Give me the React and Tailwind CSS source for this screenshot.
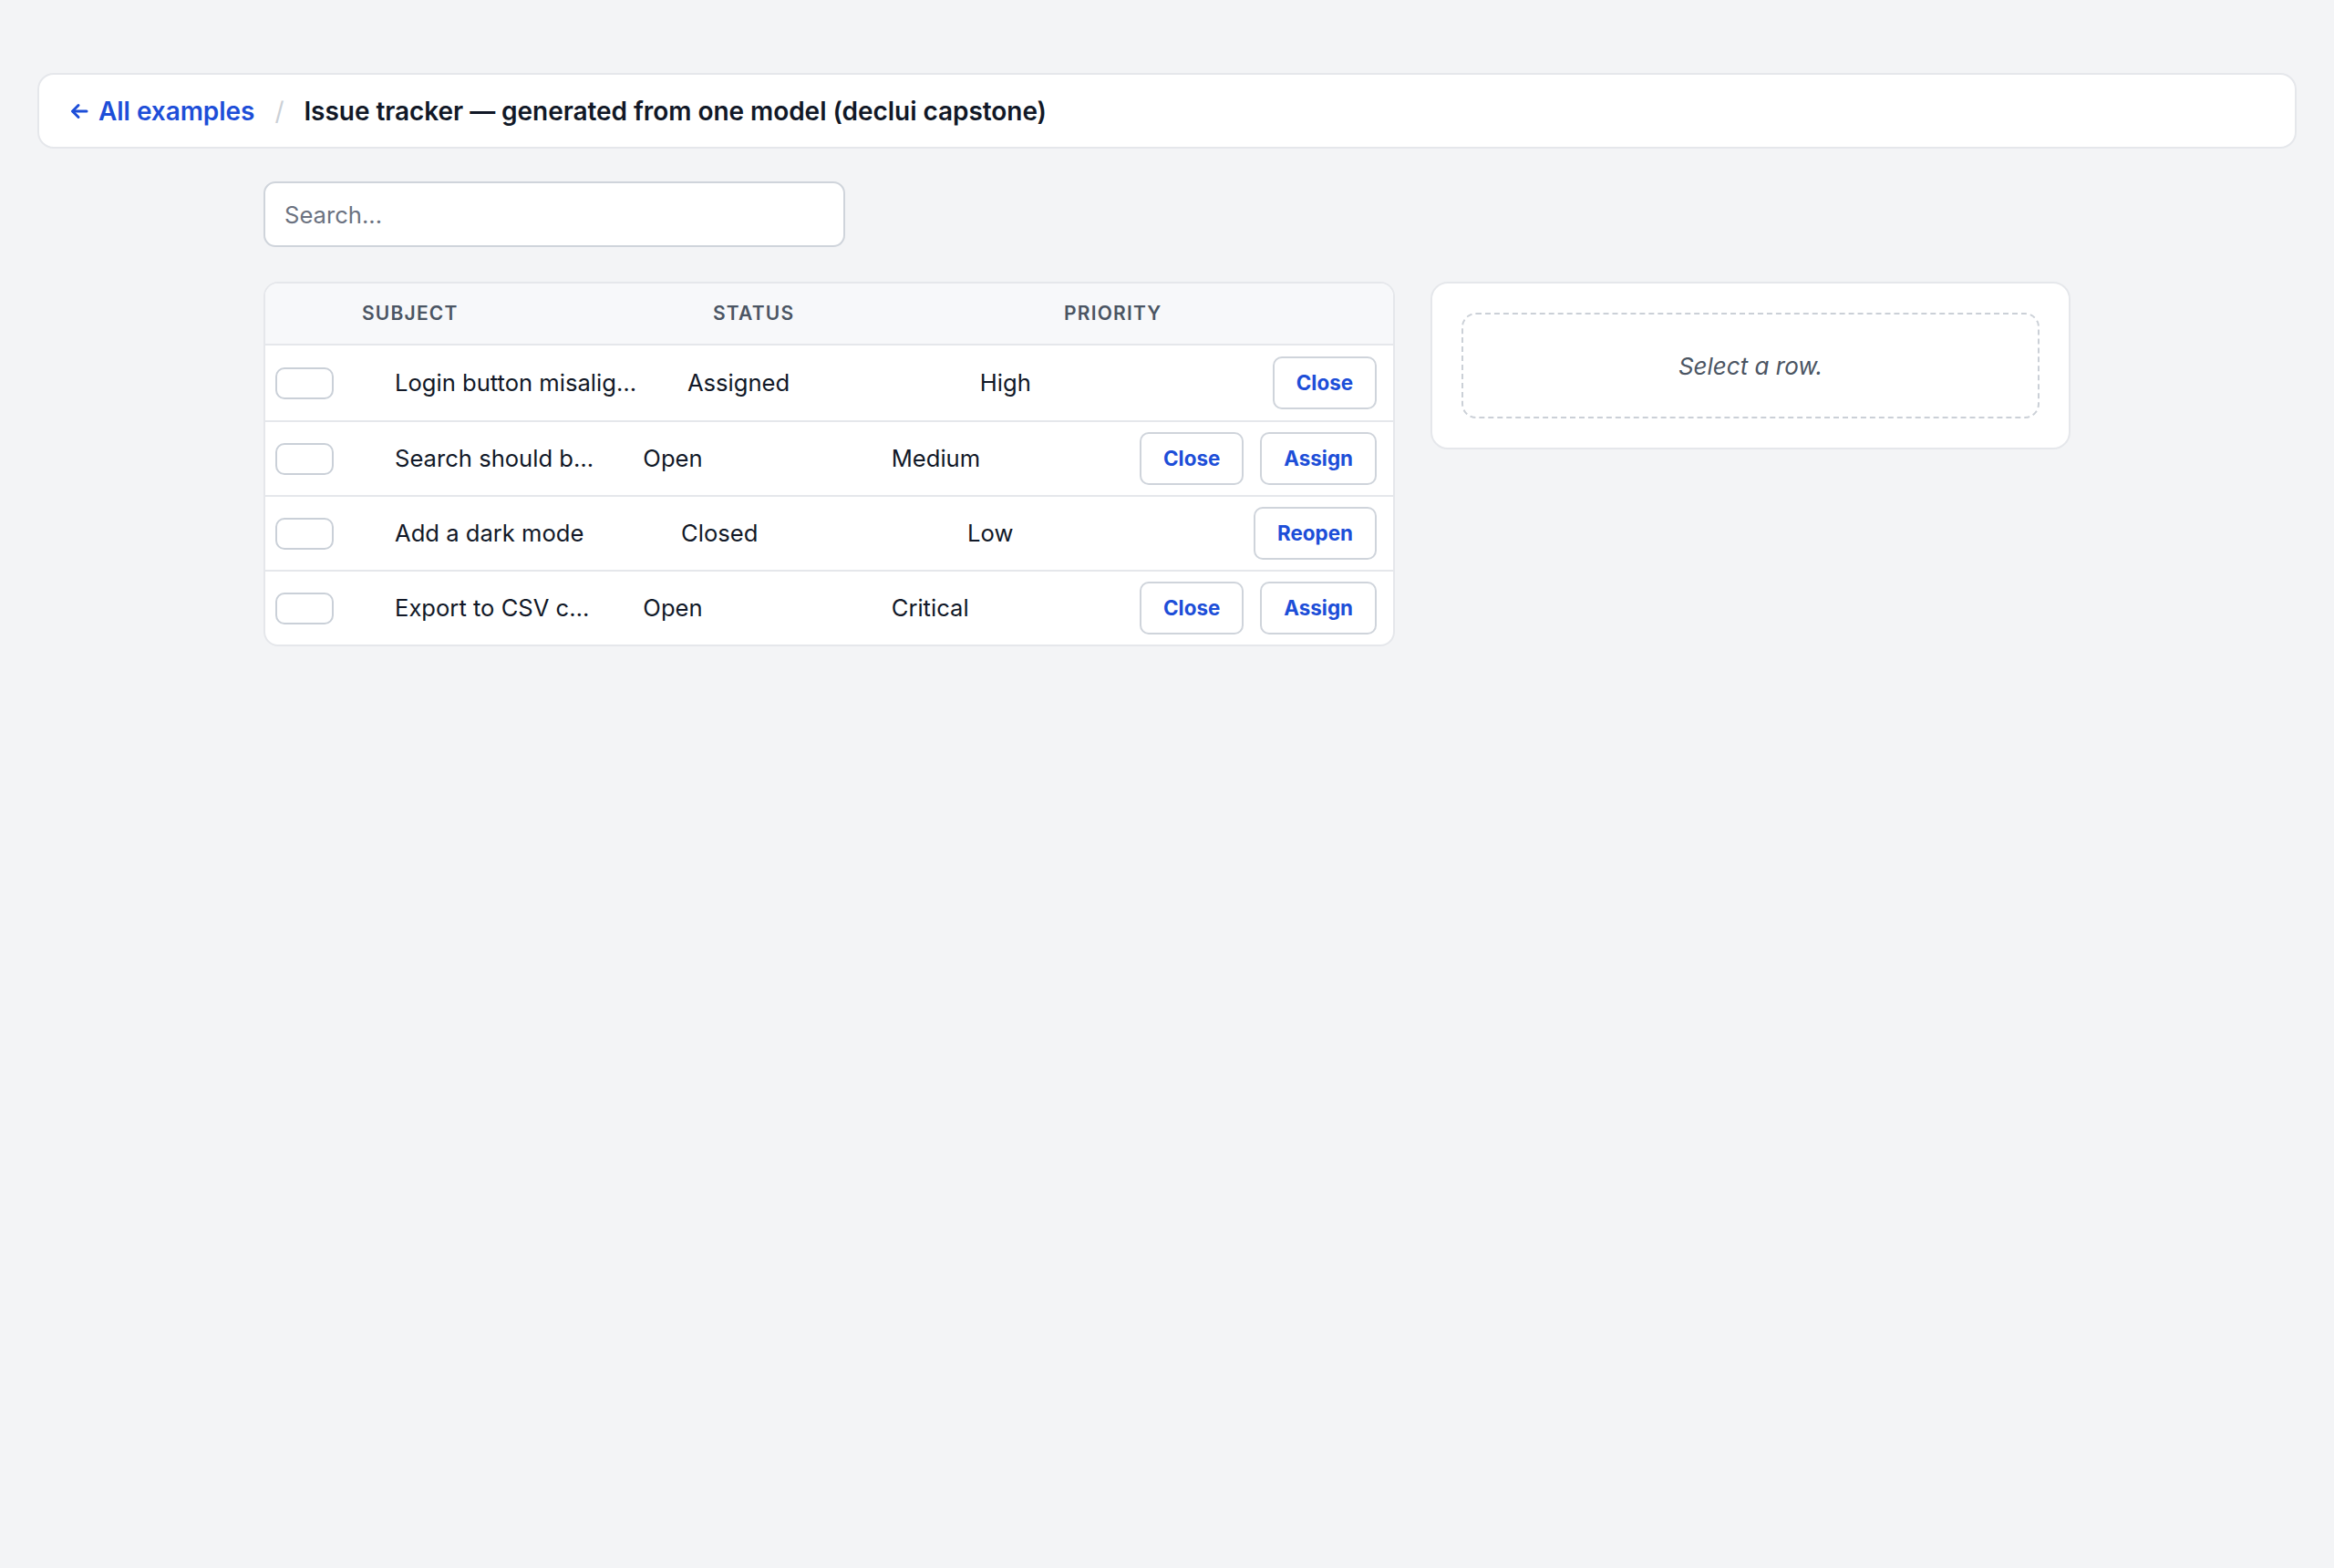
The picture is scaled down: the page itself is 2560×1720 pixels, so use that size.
import { useState } from 'react'

const issues = [
  { id: 1, subject: 'Login button misaligned on Safari', status: 'Assigned', priority: 'High', actions: ['Close'] },
  { id: 2, subject: 'Search should be case-insensitive', status: 'Open', priority: 'Medium', actions: ['Close', 'Assign'] },
  { id: 3, subject: 'Add a dark mode', status: 'Closed', priority: 'Low', actions: ['Reopen'] },
  { id: 4, subject: 'Export to CSV crashes on big lists', status: 'Open', priority: 'Critical', actions: ['Close', 'Assign'] },
]

function ArrowLeft() {
  return (
    <svg width="20" height="18" viewBox="0 0 20 18" fill="none" stroke="currentColor" strokeWidth="3" strokeLinecap="round" strokeLinejoin="round" aria-hidden="true">
      <path d="M18 9H3" />
      <path d="M9 2.5L2.5 9L9 15.5" />
    </svg>
  )
}

export default function App() {
  const [query, setQuery] = useState('')
  const [selected, setSelected] = useState(null)

  const rows = issues.filter((i) => i.subject.toLowerCase().includes(query.toLowerCase()))

  return (
    <div className="min-h-screen bg-[#f3f4f6] font-['Inter','Noto_Sans',sans-serif] text-[#111827] px-[41px] pt-[80px]">
      {/* Breadcrumb bar */}
      <div className="h-[83px] bg-white border-2 border-[#e5e7eb] rounded-[18px] px-[34px] flex items-center text-[28px] font-semibold tracking-[-0.05px]">
        <a href="#" className="flex items-center gap-[11px] text-[#1d4ed8]">
          <ArrowLeft />
          All examples
        </a>
        <span className="mx-[22px] text-[#cbd0d6] font-normal">/</span>
        <span>Issue tracker — generated from one model (declui capstone)</span>
      </div>

      <div className="w-[1982px] mx-auto">
        <input
          value={query}
          onChange={(e) => setQuery(e.target.value)}
          placeholder="Search..."
          className="mt-[36px] w-[638px] h-[72px] bg-white border-2 border-[#cfd4db] rounded-[13px] px-[21px] text-[25.6px] placeholder:text-[#6b7280] outline-none"
        />

        <div className="mt-[38px] flex items-start gap-[39px]">
          {/* Issue list */}
          <div className="w-[1241px] bg-white border-2 border-[#e5e7eb] rounded-[16px] overflow-hidden">
            <div className="h-[68px] bg-[#f7f8fa] border-b-2 border-[#e5e7eb] pl-[106px] grid grid-cols-[385px_385px_1fr] items-center text-[21px] font-semibold uppercase tracking-[1.2px] text-[#4b5563]">
              <div>Subject</div>
              <div>Status</div>
              <div>Priority</div>
            </div>
            {rows.map((row, idx) => (
              <div
                key={row.id}
                className={`h-[82px] flex items-center pl-[11px] pr-[18px] text-[25.6px] ${idx > 0 ? 'border-t-2 border-[#e5e7eb]' : ''}`}
              >
                <button
                  onClick={() => setSelected(row.id)}
                  aria-label="Select row"
                  className="w-[64px] h-[35px] shrink-0 mr-[67px] border-2 border-[#cad0d8] rounded-[10px] bg-white"
                />
                <div className="flex-1 min-w-0">
                  <div className="truncate pr-[54px]">{row.subject}</div>
                </div>
                <div className="flex-1 min-w-0">{row.status}</div>
                <div className="flex-1 min-w-0">{row.priority}</div>
                <div className="flex gap-[18px] shrink-0">
                  {row.actions.map((a) => (
                    <button
                      key={a}
                      className="h-[58px] px-[24px] border-2 border-[#cfd4db] rounded-[10px] bg-white text-[22.4px] font-bold text-[#1d4ed8]"
                    >
                      {a}
                    </button>
                  ))}
                </div>
              </div>
            ))}
          </div>

          {/* Detail panel */}
          <div className="w-[702px] bg-white border-2 border-[#e5e7eb] rounded-[19px] p-[32px]">
            <div className="h-[116px] border-2 border-dashed border-[#cbd0d7] rounded-[16px] flex items-center justify-center text-[26px] italic text-[#4b5563]">
              {selected ? issues.find((i) => i.id === selected).subject : 'Select a row.'}
            </div>
          </div>
        </div>
      </div>
    </div>
  )
}
